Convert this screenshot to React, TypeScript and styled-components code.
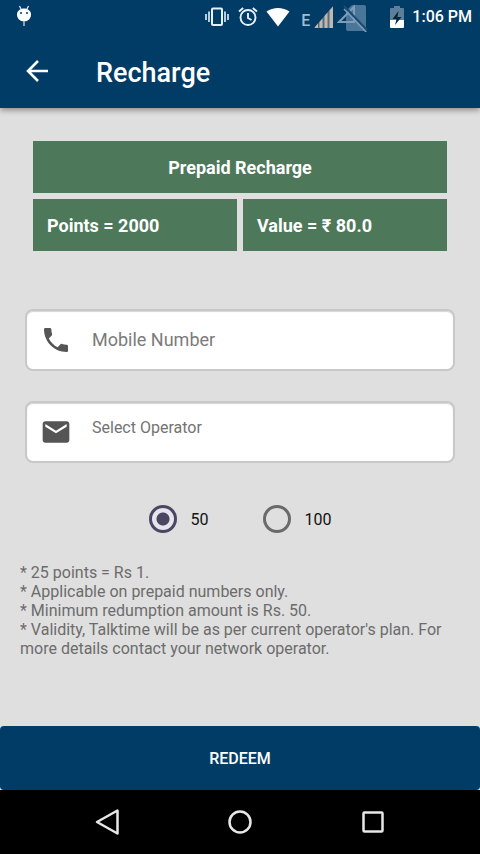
import React, { useState } from "react";
import styled, { createGlobalStyle } from "styled-components";

const NAVY = "#003c66";
const GREEN = "#4d785a";

const GlobalStyle = createGlobalStyle`
  *, *::before, *::after { box-sizing: border-box; }
  body {
    margin: 0;
    background: #dfdfdf;
    font-family: Roboto, "Noto Sans", sans-serif;
  }
  button, input, select { font-family: inherit; }
`;

const Screen = styled.div`
  display: flex;
  flex-direction: column;
  min-height: 100vh;
`;

const Header = styled.header`
  background: ${NAVY};
  color: #fff;
  box-shadow: 0 2px 6px rgba(0, 0, 0, 0.4);
`;

const StatusBar = styled.div`
  display: flex;
  align-items: center;
  justify-content: space-between;
  height: 34px;
  padding: 0 8px 0 16px;
`;

const StatusGroup = styled.div`
  display: flex;
  align-items: center;
`;

const StatusItem = styled.span<{ $gap?: number }>`
  display: flex;
  margin-left: ${({ $gap = 0 }) => $gap}px;
`;

const NetworkType = styled.span`
  margin-left: 11px;
  padding-top: 8px;
  font-size: 16px;
  font-weight: 500;
  line-height: 16px;
  color: #9dbdd4;
`;

const Clock = styled.time`
  margin-left: 8px;
  font-size: 16px;
  font-weight: 500;
  line-height: 20px;
`;

const Toolbar = styled.div`
  display: flex;
  align-items: center;
  gap: 44px;
  height: 74px;
  padding: 0 22px;
`;

const BackButton = styled.button`
  display: flex;
  padding: 0;
  border: 0;
  background: none;
  color: #fff;
`;

const Title = styled.h1`
  margin: 0;
  padding-top: 4px;
  font-size: 27px;
  font-weight: 500;
  line-height: 32px;
`;

const Form = styled.form`
  flex: 1;
  display: flex;
  flex-direction: column;
`;

const Summary = styled.section`
  display: grid;
  grid-template-columns: 1fr 1fr;
  gap: 6px;
  margin: 33px 33px 58px;
`;

const Tile = styled.div<{ $wide?: boolean }>`
  grid-column: ${({ $wide }) => ($wide ? "1 / -1" : "auto")};
  padding: 15px 14px 13px;
  background: ${GREEN};
  color: #fff;
  font-size: 18px;
  font-weight: 700;
  line-height: 24px;
  text-align: ${({ $wide }) => ($wide ? "center" : "left")};
`;

const Fields = styled.div`
  display: flex;
  flex-direction: column;
  gap: 30px;
  margin: 0 25px;
`;

const Field = styled.label`
  display: flex;
  align-items: center;
  gap: 20px;
  height: 62px;
  padding: 0 13px;
  border: 2px solid #c8c8c8;
  border-radius: 8px;
  background: #fff;
  box-shadow: inset 0 1px 1px #d4d4d4;
  color: #555;
`;

const NumberInput = styled.input`
  flex: 1;
  min-width: 0;
  padding: 0;
  border: 0;
  outline: 0;
  background: none;
  color: #333;
  font-size: 18px;
  line-height: 24px;
  &::placeholder { color: #7b7b7b; opacity: 1; }
`;

const OperatorSelect = styled.select`
  flex: 1;
  min-width: 0;
  padding: 0 0 8px;
  border: 0;
  outline: 0;
  appearance: none;
  background: none;
  color: #737373;
  font-size: 16px;
  line-height: 24px;
`;

const Amounts = styled.fieldset`
  display: flex;
  justify-content: center;
  gap: 54px;
  min-width: 0;
  margin: 42px 0 30px;
  padding: 0;
  border: 0;
`;

const Amount = styled.label`
  display: flex;
  align-items: center;
  gap: 14px;
  color: #111;
  font-size: 16px;
  line-height: 28px;
`;

const AmountText = styled.span`
  padding-top: 2px;
  line-height: 26px;
`;

const Radio = styled.input`
  appearance: none;
  width: 28px;
  height: 28px;
  margin: 0;
  border: 3px solid #6a6a6a;
  border-radius: 50%;
  &:checked {
    border-color: #4b4763;
    background: radial-gradient(circle, #4b4763 6px, #e6e4ec 7px);
  }
`;

const Notes = styled.ul`
  margin: 0 20px 68px;
  padding: 0;
  list-style: none;
  color: #6c6c6c;
  font-size: 16px;
  line-height: 19px;
`;

const RedeemButton = styled.button`
  margin-top: auto;
  padding: 21px 20px 19px;
  border: 0;
  border-radius: 4px;
  background: ${NAVY};
  color: #fff;
  font-size: 16px;
  font-weight: 500;
  line-height: 24px;
`;

const NavBar = styled.nav`
  display: flex;
  justify-content: center;
  gap: 101px;
  padding: 16px 0;
  background: #000;
`;

const NavButton = styled.button`
  display: flex;
  padding: 0;
  border: 0;
  background: none;
  color: #e8e8e8;
`;

const DroidIcon = () => (
  <svg width="16" height="24" viewBox="0 0 16 24" aria-hidden="true">
    <path d="M3.5 1l2 4M12.5 1l-2 4" stroke="#d5e6f1" strokeWidth="1.3" />
    <path d="M1 9.500C1 6 4 3.500 8 3.500s7 2.500 7 6c0 4-3 7-7 7s-7-3-7-7z" fill="#fff" />
    <path d="M7.200 16h1.600v5H7.200z" fill="#9dbdd4" />
    <circle cx="5" cy="8" r="1" fill={NAVY} />
    <circle cx="11" cy="8" r="1" fill={NAVY} />
  </svg>
);

const VibrateIcon = () => (
  <svg width="24" height="20" viewBox="0 0 24 20" fill="none" stroke="#e6f2fa" aria-hidden="true">
    <rect x="7" y="1.500" width="10" height="16.500" rx="1" strokeWidth="2" />
    <path d="M4 4.500v10.500M20 4.500v10.500M1 7v6M23 7v6" strokeWidth="2" stroke="#b5cddd" />
  </svg>
);

const AlarmIcon = () => (
  <svg width="20" height="20" viewBox="0 0 20 20" fill="none" stroke="#e6f2fa" strokeWidth="1.9" aria-hidden="true">
    <circle cx="10" cy="10.500" r="7.500" />
    <path d="M10 6v5l3.500 2M1 4.500L5.200 1M19 4.500L14.800 1" />
  </svg>
);

const WifiIcon = () => (
  <svg width="24" height="20" viewBox="0 0 24 20" aria-hidden="true">
    <path d="M12 19.500L.5 4.500C7 -.3 17-.3 23.500 4.500z" fill="#fff" />
  </svg>
);

const SignalIcon = () => (
  <svg width="20" height="23" viewBox="0 0 20 23" aria-hidden="true">
    <path d="M0 22L19 0v22z" fill="#4d6f89" />
    <path d="M1 21l3-3.500V22H1zM5.500 16l3-3.500V22h-3zM10.500 10l3-3.500V22h-3zM15.500 4.500L19 .5V22h-3.500z" fill="#c5b7aa" />
  </svg>
);

const NoSimIcon = () => (
  <svg width="32" height="30" viewBox="0 0 32 30" aria-hidden="true">
    <path d="M15 3h12q2 0 2 2v22q0 2-2 2H11q-2 0-2-2V9z" fill="#4a7699" />
    <path d="M2 20L17 5v15z" fill="none" stroke="#7f9eb6" strokeWidth="2" />
    <path d="M7 4l23 24" stroke="#174d75" strokeWidth="2" />
    <path d="M7 7l23 24" stroke="#7f9eb6" strokeWidth="1.5" />
  </svg>
);

const BatteryIcon = () => (
  <svg width="14" height="22" viewBox="0 0 14 22" aria-hidden="true">
    <path d="M4 0h6v2h3q1 0 1 1v11H0V3q0-1 1-1h3z" fill="#5e7f99" />
    <path d="M0 14h14v7q0 1-1 1H1q-1 0-1-1z" fill="#fff" />
    <path d="M8.500 5L2.500 13h4L5 19l6.500-8h-4z" fill="#06263f" />
  </svg>
);

const BackArrowIcon = () => (
  <svg width="30" height="30" viewBox="0 0 30 30" fill="none" stroke="currentColor" strokeWidth="2.600" aria-hidden="true">
    <path d="M26 15H7M16 5L6 15l10 10" />
  </svg>
);

const PhoneIcon = () => (
  <svg width="32" height="32" viewBox="0 0 24 24" fill="currentColor" aria-hidden="true">
    <path d="M6.620 10.790c1.440 2.830 3.760 5.140 6.590 6.590l2.200-2.200c.27-.27.67-.36 1.020-.24 1.120.37 2.330.57 3.570.57.55 0 1 .45 1 1V20c0 .55-.45 1-1 1-9.390 0-17-7.610-17-17 0-.55.45-1 1-1h3.500c.55 0 1 .45 1 1 0 1.250.2 2.450.57 3.570.11.35.03.74-.25 1.020l-2.200 2.200z" />
  </svg>
);

const MailIcon = () => (
  <svg width="32" height="32" viewBox="0 0 24 24" fill="currentColor" aria-hidden="true">
    <path d="M20 4H4c-1.100 0-2 .9-2 2v12c0 1.100.9 2 2 2h16c1.100 0 2-.9 2-2V6c0-1.100-.9-2-2-2zm0 4l-8 5-8-5V6l8 5 8-5v2z" />
  </svg>
);

const navIcons = [
  { label: "Back", shape: <path d="M26.500 4.500v23L6 16z" /> },
  { label: "Home", shape: <circle cx="16" cy="16" r="10.500" /> },
  { label: "Recent apps", shape: <rect x="6.500" y="6.500" width="19" height="19" rx="1" /> },
];

const notes = [
  "* 25 points = Rs 1.",
  "* Applicable on prepaid numbers only.",
  "* Minimum redumption amount is Rs. 50.",
  "* Validity, Talktime will be as per current operator's plan. For more details contact your network operator.",
];

export default function App() {
  const [amount, setAmount] = useState("50");

  return (
    <Screen>
      <GlobalStyle />
      <Header>
        <StatusBar>
          <DroidIcon />
          <StatusGroup>
            <StatusItem><VibrateIcon /></StatusItem>
            <StatusItem $gap={9}><AlarmIcon /></StatusItem>
            <StatusItem $gap={8}><WifiIcon /></StatusItem>
            <NetworkType>E</NetworkType>
            <StatusItem $gap={4}><SignalIcon /></StatusItem>
            <StatusItem $gap={3}><NoSimIcon /></StatusItem>
            <StatusItem $gap={21}><BatteryIcon /></StatusItem>
            <Clock>1:06 PM</Clock>
          </StatusGroup>
        </StatusBar>
        <Toolbar>
          <BackButton type="button" aria-label="Go back"><BackArrowIcon /></BackButton>
          <Title>Recharge</Title>
        </Toolbar>
      </Header>

      <Form onSubmit={(event) => event.preventDefault()}>
        <Summary>
          <Tile $wide>Prepaid Recharge</Tile>
          <Tile>Points = 2000</Tile>
          <Tile>Value = ₹ 80.0</Tile>
        </Summary>

        <Fields>
          <Field>
            <PhoneIcon />
            <NumberInput type="tel" placeholder="Mobile Number" aria-label="Mobile Number" />
          </Field>
          <Field>
            <MailIcon />
            <OperatorSelect aria-label="Operator">
              <option>Select Operator</option>
            </OperatorSelect>
          </Field>
        </Fields>

        <Amounts aria-label="Amount">
          {["50", "100"].map((value) => (
            <Amount key={value}>
              <Radio
                type="radio"
                name="amount"
                value={value}
                checked={amount === value}
                onChange={() => setAmount(value)}
              />
              <AmountText>{value}</AmountText>
            </Amount>
          ))}
        </Amounts>

        <Notes>
          {notes.map((note) => (
            <li key={note}>{note}</li>
          ))}
        </Notes>

        <RedeemButton type="submit">REDEEM</RedeemButton>
      </Form>

      <NavBar>
        {navIcons.map(({ label, shape }) => (
          <NavButton key={label} type="button" aria-label={label}>
            <svg width="32" height="32" viewBox="0 0 32 32" fill="none" stroke="currentColor" strokeWidth="2.500" strokeLinejoin="round" aria-hidden="true">
              {shape}
            </svg>
          </NavButton>
        ))}
      </NavBar>
    </Screen>
  );
}
